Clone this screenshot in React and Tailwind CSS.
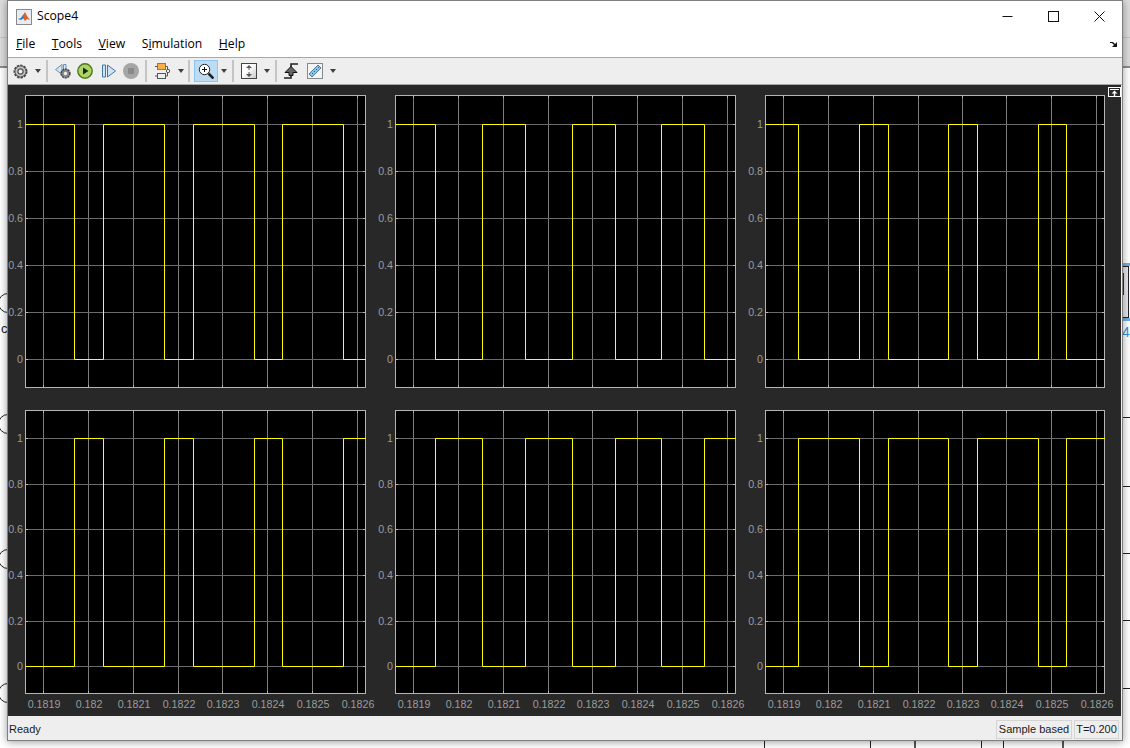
import React from "react";

const labels = ["0.1819", "0.182", "0.1821", "0.1822", "0.1823", "0.1824", "0.1825", "0.1826"];
const yLabels = ["1", "0.8", "0.6", "0.4", "0.2", "0"];

// edges of each pulse, measured from the left of the plot
const columns = [
  { w: 341, ticks: [18, 63, 108, 153, 197, 242, 287, 332], edges: [49, 78, 139, 168, 229, 257, 318] },
  { w: 341, ticks: [18, 63, 108, 153, 197, 242, 287, 332], edges: [40, 87, 130, 177, 220, 266, 309] },
  { w: 340, ticks: [18, 63, 108, 153, 197, 241, 286, 331], edges: [33, 94, 123, 183, 212, 273, 301] },
];

const rows = [
  { h: 293, y1: 29, y0: 264, startHigh: true, yTicks: [29, 76, 123, 170, 217, 264] },
  { h: 284, y1: 28, y0: 256, startHigh: false, yTicks: [28, 74, 119, 165, 211, 256] },
];

const wavePath = (column, row) => {
  let high = row.startHigh;
  let d = `M0.5 ${high ? row.y1 + 0.5 : row.y0 + 0.5}`;
  column.edges.forEach((x) => {
    d += ` H${x + 0.5}`;
    high = !high;
    d += ` V${(high ? row.y1 : row.y0) + 0.5}`;
  });
  return d + ` H${column.w}`;
};

const Plot = ({ column, row, showX }) => {
  const w = column.w;
  return (
    <svg
      width={w}
      height={row.h}
      viewBox={`0 0 ${w} ${row.h}`}
      className="block overflow-visible bg-black font-['Liberation_Sans',sans-serif] text-[10.7px]"
    >
      {column.ticks.map((x) => (
        <g key={x}>
          <line x1={x + 0.5} x2={x + 0.5} y1={0} y2={row.h} stroke="#7c7c7c" />
          <line x1={x + 0.5} x2={x + 0.5} y1={0} y2={3} stroke="#b4b4b4" />
          <line x1={x + 0.5} x2={x + 0.5} y1={row.h - 3} y2={row.h} stroke="#b4b4b4" />
        </g>
      ))}
      {row.yTicks.map((y) => (
        <g key={y}>
          <line x1={0} x2={w} y1={y + 0.5} y2={y + 0.5} stroke="#6c6c6c" />
          <line x1={0} x2={3} y1={y + 0.5} y2={y + 0.5} stroke="#b4b4b4" />
          <line x1={w - 3} x2={w} y1={y + 0.5} y2={y + 0.5} stroke="#b4b4b4" />
        </g>
      ))}
      <rect x={0.5} y={0.5} width={w - 1} height={row.h - 1} fill="none" stroke="#b4b4b4" />
      <path d={wavePath(column, row)} fill="none" stroke="#ffff00" />
      {row.yTicks.map((y, i) => (
        <text key={y} x={-2} y={y + 4} textAnchor="end" fill="#9c9c9c">
          {yLabels[i]}
        </text>
      ))}
      {showX &&
        column.ticks.map((x, i) => (
          <text key={x} x={x + 1} y={row.h + 14} textAnchor="middle" fill="#9c9c9c">
            {labels[i]}
          </text>
        ))}
    </svg>
  );
};

const Separator = ({ className }) => <div className={`h-[22px] w-[2px] bg-[#c4c4c4] ${className}`} />;

const Caret = ({ className }) => (
  <svg width="6" height="4" viewBox="0 0 6 4" className={className}>
    <path d="M0 0h6L3 4z" fill="#404040" />
  </svg>
);

const BehindArc = ({ className }) => (
  <div className={`absolute left-[-2px] h-[20px] w-[20px] rounded-full border border-[#222] ${className}`} />
);

const App = () => {
  return (
    <div className="relative h-[748px] w-[1130px] overflow-hidden bg-white font-['Liberation_Sans',sans-serif]">
      {/* Model canvas showing behind the scope window */}
      <div className="absolute left-0 top-0 h-[67px] w-[1130px] bg-[#dcdcdc]" />
      <div className="absolute left-0 top-[37px] h-px w-[1130px] bg-[#c4c4c4]" />
      <div className="absolute left-0 top-[66px] h-[2px] w-[1130px] bg-[#8c8c8c]" />
      <BehindArc className="top-[293px]" />
      <div className="absolute left-[1px] top-[319px] text-[13px] text-[#222]">c</div>
      <BehindArc className="top-[414px]" />
      <BehindArc className="top-[549px]" />
      <BehindArc className="top-[683px]" />
      <div className="absolute left-[1122px] top-[263px] h-[58px] w-[8px] border-y-[3px] border-y-[#6fb1e0]">
        <div className="h-full w-[7px] border-y border-r border-[#223] bg-[#e8e8e8] pt-[6px]">
          <div className="ml-[1px] h-[22px] w-px bg-[#333]" />
        </div>
      </div>
      <div className="absolute left-[1122px] top-[324px] text-[14px] leading-4 text-[#2f8fe0]">4</div>
      <div className="absolute left-[1122px] top-[417px] h-px w-[8px] bg-[#222]" />
      <div className="absolute left-[1122px] top-[486px] h-px w-[8px] bg-[#222]" />
      <div className="absolute left-[1122px] top-[553px] h-px w-[8px] bg-[#222]" />
      <div className="absolute left-[1122px] top-[620px] h-px w-[8px] bg-[#222]" />
      <div className="absolute left-[1122px] top-[688px] h-px w-[8px] bg-[#222]" />
      <div className="absolute left-[764px] top-[740px] h-[8px] w-px bg-[#222]" />
      <div className="absolute left-[870px] top-[740px] h-[8px] w-px bg-[#222]" />
      <div className="absolute left-[914px] top-[740px] h-[8px] w-[2px] bg-[#555]" />
      <div className="absolute left-[981px] top-[740px] h-[8px] w-px bg-[#222]" />
      <div className="absolute left-[1003px] top-[740px] h-[8px] w-px bg-[#222]" />
      <div className="absolute left-[1062px] top-[740px] h-[8px] w-[2px] bg-[#555]" />

      {/* Scope window */}
      <div className="absolute left-[7px] top-0 flex h-[741px] w-[1116px] flex-col border border-[#7f7f7f] bg-white shadow-[0_1px_8px_rgba(0,0,0,0.4)]">
        {/* Title bar */}
        <div className="flex h-[30px] items-center pt-[1px] font-['Open_Sans',sans-serif] text-[12.2px] text-black">
          <svg width="16" height="16" viewBox="0 0 16 16" className="ml-[8px] mr-[5px]">
            <rect x="0.5" y="0.5" width="15" height="15" fill="#e8ecf2" stroke="#8a8a8a" />
            <path d="M2 10l3-1 2-3 2-3 2 4 3 4-3-1-2 2-2-3z" fill="#d9622b" />
            <path d="M2 10l3-1 2-3 1 3-3 2z" fill="#2f7fc4" />
          </svg>
          <span>Scope4</span>
          <div className="ml-auto flex items-center">
            <div className="flex w-[46px] justify-center">
              <svg width="11" height="11" viewBox="0 0 11 11">
                <path d="M0.5 5.5h10" stroke="#111" />
              </svg>
            </div>
            <div className="flex w-[46px] justify-center">
              <svg width="11" height="11" viewBox="0 0 11 11">
                <rect x="0.5" y="0.5" width="10" height="10" fill="none" stroke="#111" />
              </svg>
            </div>
            <div className="flex w-[46px] justify-center">
              <svg width="11" height="11" viewBox="0 0 11 11">
                <path d="M0.5 0.5l10 10M10.5 0.5l-10 10" stroke="#111" />
              </svg>
            </div>
          </div>
        </div>

        {/* Menu bar */}
        <div className="relative flex h-[26px] items-center gap-[16.5px] pl-[8px] pt-[1px] font-['Open_Sans',sans-serif] text-[12.2px] text-black">
          <span><u>F</u>ile</span>
          <span><u>T</u>ools</span>
          <span><u>V</u>iew</span>
          <span>S<u>i</u>mulation</span>
          <span><u>H</u>elp</span>
          <svg width="8" height="6" viewBox="0 0 8 6" className="absolute right-[4px] top-[10px]">
            <path d="M0 1h3l2 2 2-2v5H2l2-2-2-2H0z" fill="#111" />
          </svg>
        </div>

        {/* Toolbar */}
        <div className="flex h-[28px] items-center border-y border-y-[#a8a8a8] bg-[#eeeeee]">
          <svg width="15" height="15" viewBox="0 0 15 15" className="ml-[5px]">
            <circle cx="7.5" cy="7.5" r="6" fill="#666" stroke="#4a4a4a" strokeWidth="2" strokeDasharray="2.4 1" />
            <circle cx="7.5" cy="7.5" r="5" fill="#c4c4c4" />
            <circle cx="7.5" cy="7.5" r="3.2" fill="#555" />
            <circle cx="7.5" cy="7.5" r="1.9" fill="#efefef" />
          </svg>
          <Caret className="ml-[7px]" />
          <Separator className="ml-[5px]" />
          <svg width="16" height="16" viewBox="0 0 16 16" className="ml-[7px]">
            <path d="M0.5 6.5L7 1.5v10z" fill="#d5e5f3" stroke="#6b93b8" />
            <path d="M8.5 1.5h2.5v6h-2.5z" fill="#d5e5f3" stroke="#6b93b8" />
            <circle cx="10.5" cy="10.5" r="4.4" fill="#888" stroke="#3c3c3c" strokeWidth="1.4" strokeDasharray="2 0.8" />
            <circle cx="10.5" cy="10.5" r="1.7" fill="#eee" />
          </svg>
          <svg width="16" height="16" viewBox="0 0 16 16" className="ml-[6px]">
            <circle cx="8" cy="8" r="7.2" fill="#aed468" stroke="#4c7a16" strokeWidth="1.4" />
            <path d="M6 4.5l5.5 3.5L6 11.5z" fill="#1e2a10" />
          </svg>
          <svg width="14" height="14" viewBox="0 0 14 14" className="ml-[9px]">
            <path d="M0.5 1h3v12h-3zM5.5 1l8 6-8 6z" fill="#cfe3f5" stroke="#3f78ad" />
          </svg>
          <svg width="16" height="16" viewBox="0 0 16 16" className="ml-[7px]">
            <circle cx="8" cy="8" r="8" fill="#a6a6a6" />
            <rect x="5" y="5" width="6" height="6" fill="#8a8a8a" />
          </svg>
          <Separator className="ml-[6px]" />
          <svg width="16" height="16" viewBox="0 0 16 16" className="ml-[8px]">
            <rect x="2.5" y="0.5" width="8" height="6" fill="#f5b04c" stroke="#b5701c" />
            <rect x="2.5" y="10.5" width="8" height="5" fill="#eee" stroke="#555" />
            <path d="M0 3.5h2.5M0 13h2.5M10.5 3.5h2v3M10.5 13h2v-3" fill="none" stroke="#555" />
            <circle cx="13" cy="8" r="1.7" fill="#eee" stroke="#555" />
          </svg>
          <Caret className="ml-[7px]" />
          <Separator className="ml-[4px]" />
          <div className="ml-[4px] flex h-[22px] w-[24px] items-center justify-center border border-[#8ec4f0] bg-[#bcdcf4]">
            <svg width="16" height="16" viewBox="0 0 16 16">
              <circle cx="6.5" cy="6.5" r="5.2" fill="#fff" stroke="#222" />
              <path d="M4 6.5h5M6.5 4v5" stroke="#111" />
              <path d="M10.5 10.5l5 5" stroke="#222" strokeWidth="2.6" />
            </svg>
          </div>
          <Caret className="ml-[3px]" />
          <Separator className="ml-[5px]" />
          <svg width="16" height="16" viewBox="0 0 16 16" className="ml-[7px]">
            <defs>
              <linearGradient id="autoscaleFill" x1="0" y1="0" x2="1" y2="1">
                <stop offset="0.4" stopColor="#ffffff" />
                <stop offset="1" stopColor="#c8c8c8" />
              </linearGradient>
            </defs>
            <rect x="0.5" y="0.5" width="15" height="15" fill="url(#autoscaleFill)" stroke="#444" />
            <path d="M8 2l3 3H5zM8 14l3-3H5z" fill="#555" />
            <path d="M8 5v2M8 9v2" stroke="#555" />
          </svg>
          <Caret className="ml-[7px]" />
          <Separator className="ml-[5px]" />
          <svg width="14" height="16" viewBox="0 0 14 16" className="ml-[7px]">
            <path d="M0 15h7V1h7" fill="none" stroke="#222" strokeWidth="1.6" />
            <path d="M7 3.5l6 6H9v3H5v-3H1z" fill="#666" stroke="#111" />
          </svg>
          <svg width="16" height="16" viewBox="0 0 16 16" className="ml-[9px]">
            <rect x="0.5" y="0.5" width="15" height="15" fill="#f4f4f4" stroke="#888" />
            <path d="M2 11l9-9 3 3-9 9z" fill="#8cc3e8" stroke="#4d7f9f" />
            <path d="M5 10l1 1M7 8l1 1M9 6l1 1M11 4l1 1" stroke="#2e5f80" />
          </svg>
          <Caret className="ml-[7px]" />
        </div>

        {/* Plot area */}
        <div className="relative grid flex-1 grid-cols-[341px_341px_340px] content-start gap-x-[29px] gap-y-[22px] border-r border-r-[#efefef] bg-[#282828] pl-[17px] pt-[10px]">
          {rows.map((row, r) =>
            columns.map((column, c) => (
              <Plot key={`${r}-${c}`} column={column} row={row} showX={r === 1} />
            ))
          )}
          <div className="absolute right-0 top-[2px] flex h-[10px] w-[13px] items-center justify-center border border-white">
            <svg width="9" height="7" viewBox="0 0 9 7">
              <path d="M0 0.5h9" stroke="#fff" />
              <path d="M4.5 1.5L7.5 4.5H5.2V7H3.8V4.5H1.5z" fill="#fff" />
            </svg>
          </div>
        </div>

        {/* Status bar */}
        <div className="flex h-[24px] items-center gap-[2px] bg-[#eeeeee] pl-[1px] pr-[3px] pt-[2px] text-[11px] text-[#1a1a1a]">
          <span>Ready</span>
          <span className="ml-auto flex h-[19px] w-[76px] items-center justify-center border border-[#d4d4d4]">Sample based</span>
          <span className="flex h-[19px] w-[45px] items-center justify-center border border-[#d4d4d4]">T=0.200</span>
        </div>
      </div>
    </div>
  );
};

export default App;
